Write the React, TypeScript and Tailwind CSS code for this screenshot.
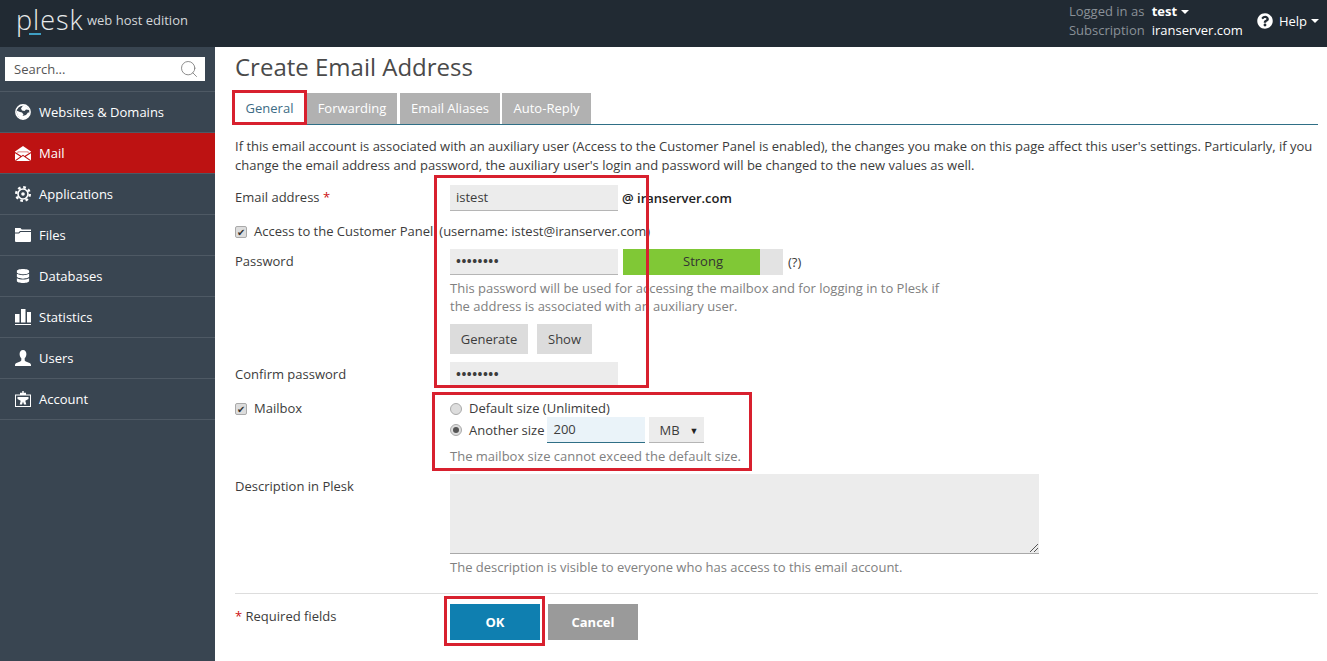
import React from "react";
import { FaDatabase, FaQuestionCircle } from "react-icons/fa";
import { Search } from "lucide-react";

const Globe = () => (
  <svg width="16" height="16" viewBox="0 0 16 16" fill="#fff">
    <circle cx="8" cy="8" r="7.100" fill="none" stroke="#fff" strokeWidth="1.600" />
    <path d="M8 1.500 12 2.500 14.500 6 11 5.500 9.500 7 7 6.500 6 4.500z" />
    <path d="M1.500 6.500 5 8l2 .5 1.500 2L7.500 12 11 11l2-2.500 1.500 0-1 4-4 2.500-4-.5-3-3z" />
  </svg>
);

const Mail = () => (
  <svg width="16" height="15" viewBox="0 0 16 15">
    <path d="M8 0 16 5.500V15H0V5.500Z" fill="#fff" />
    <path d="M2.500 6.200h11" stroke="#bd1212" strokeWidth="1.100" fill="none" />
    <path d="M2.500 6.200 8 10l5.500-3.800" fill="#fff" />
    <path d="M0 6.500 5.800 10.200M16 6.500 10.200 10.200M.3 14.700 8 9.300l7.700 5.400" stroke="#bd1212" strokeWidth="1.100" fill="none" />
  </svg>
);

const Gear = () => (
  <svg width="16" height="16" viewBox="0 0 16 16" fill="none" stroke="#fff">
    <circle cx="8" cy="8" r="6.800" strokeWidth="2.400" strokeDasharray="2.670 2.670" />
    <circle cx="8" cy="8" r="5" strokeWidth="1.600" />
    <circle cx="8" cy="8" r="1.800" fill="#fff" strokeWidth="0" />
  </svg>
);

const Folder = () => (
  <svg width="16" height="14" viewBox="0 0 16 14" fill="#fff">
    <path d="M0 0h5.500l1.200 1.500H16V3H5L3.500 4.500H0z" />
    <path d="M0 5.500h4L5.500 4H16v9a1 1 0 01-1 1H1a1 1 0 01-1-1z" />
  </svg>
);

const Bars = () => (
  <svg width="16" height="16" viewBox="0 0 16 16" fill="#fff">
    <rect x="0" y="5" width="4.500" height="8.500" />
    <rect x="6" y="0" width="4.500" height="13.500" />
    <rect x="12" y="3" width="4" height="10.500" />
    <rect x="0" y="15" width="16" height="1" />
  </svg>
);

const User = () => (
  <svg width="16" height="16" viewBox="0 0 16 16" fill="#fff">
    <path d="M8 0c2.200 0 3.400 1.800 3.400 4 0 1.800-.8 3.400-1.700 4.300v2c0 .8 1 1.300 3 2 1.800.6 3.300 1.300 3.300 2.700v1H0v-1c0-1.400 1.500-2.100 3.300-2.700 2-.7 3-1.200 3-2v-2C5.400 7.400 4.600 5.800 4.600 4 4.600 1.800 5.800 0 8 0z" />
  </svg>
);

const Account = () => (
  <svg width="16" height="16" viewBox="0 0 16 16" fill="#fff">
    <path fillRule="evenodd" d="M0 3.500h5V1.800h2.300V0h1.400v1.800H11v1.700h5V16H0zm1 1V15h14V4.500z" />
    <path d="M2.500 6h11v2L10.300 9.800l1 3.700H9L8 10.500l-1 3H4.700l1-3.700L2.500 8z" />
  </svg>
);

const navItems: [string, React.ReactNode, boolean?][] = [
  ["Websites & Domains", <Globe />],
  ["Mail", <Mail />, true],
  ["Applications", <Gear />],
  ["Files", <Folder />],
  ["Databases", <FaDatabase size={14} className="text-white" />],
  ["Statistics", <Bars />],
  ["Users", <User />],
  ["Account", <Account />],
];

const Caret = () => <span className="inline-block ml-1 mb-[2px] border-x-[4px] border-t-[4px] border-x-transparent border-t-current align-middle" />;

const Dots = () => <span className="tracking-[0.5px] text-[13px] font-bold">••••••••</span>;

const Check = () => (
  <span className="w-[12px] h-[12px] shrink-0 rounded-[2px] border border-[#aaa] bg-[#ddd] flex items-center justify-center text-[10px] leading-none text-[#333]">✔</span>
);

export default function App() {
  return (
    <div className="relative w-[1327px] h-[661px] overflow-hidden bg-white text-[13px] leading-[19px] text-[#3c3c3c] font-['Open_Sans',sans-serif]">
      <header className="h-[47px] bg-[#212a33] flex items-center justify-between pl-[16px] pr-[8px]">
        <div className="flex items-center">
          <div className="relative h-[47px] w-[65px]">
            <span className="block text-[27px] leading-[36px] mt-[2px] font-light tracking-[1px] text-[#e8eaec]">plesk</span>
            <span className="absolute left-[13px] top-[33px] w-[12px] h-[2px] bg-[#3f9fc4]" />
          </div>
          <span className="ml-[6px] mb-[7px] text-[#d3d6d9]">web host edition</span>
        </div>
        <div className="flex items-center mb-[5px]">
          <div className="grid grid-cols-[auto_auto] gap-x-[7px] leading-[19px]">
            <span className="text-[#8a9198]">Logged in as</span>
            <span className="text-white font-bold">test<Caret /></span>
            <span className="text-[#8a9198]">Subscription</span>
            <span className="text-white">iranserver.com</span>
          </div>
          <FaQuestionCircle size={16} className="ml-[14px] text-white" />
          <span className="ml-[6px] text-white">Help<Caret /></span>
        </div>
      </header>

      <div className="flex h-[614px]">
        <aside className="w-[215px] shrink-0 bg-[#394551]">
          <div className="h-[45px] pt-[10px] pl-[5px] pr-[10px] border-b border-[#4e5964]">
            <div className="h-[24px] bg-white flex items-center justify-between pl-[9px] pr-[6px] text-[#555]">
              <span>Search...</span>
              <Search size={20} strokeWidth={1} className="text-[#777]" />
            </div>
          </div>
          {navItems.map(([label, icon, active]) => (
            <div key={label} className={`h-[41px] flex items-center border-b border-[#4e5964] text-white ${active ? "bg-[#bd1212]" : ""}`}>
              <span className="w-[39px] shrink-0 flex justify-center pl-[15px] pr-[8px]">{icon}</span>
              <span>{label}</span>
            </div>
          ))}
        </aside>

        <main className="flex-1 pl-[20px] pr-[9px]">
          <h1 className="text-[24px] leading-[32px] mt-[4px] text-[#4a4a4a]">Create Email Address</h1>
          <nav className="flex h-[32px] mt-[10px] border-b border-[#2f6f86]">
            <div className="w-[69px] flex items-center justify-center text-[#3d6c85] bg-white">General</div>
            <div className="ml-[3px] w-[90px] flex items-center justify-center text-white bg-[#b1b1b1]">Forwarding</div>
            <div className="ml-[3px] w-[100px] flex items-center justify-center text-white bg-[#b1b1b1]">Email Aliases</div>
            <div className="ml-[2px] w-[89px] flex items-center justify-center text-white bg-[#b1b1b1]">Auto-Reply</div>
          </nav>
          <p className="mt-[12px]">If this email account is associated with an auxiliary user (Access to the Customer Panel is enabled), the changes you make on this page affect this user's settings. Particularly, if you change the email address and password, the auxiliary user's login and password will be changed to the new values as well.</p>

          <div className="flex mt-[10px] h-[26px] items-center">
            <label className="w-[215px] mt-[-2px]">Email address <span className="text-[#c11]">*</span></label>
            <div className="w-[168px] h-[26px] bg-[#ececec] border-b border-[#b5b5b5] px-[6px] leading-[24px]">istest</div>
            <span className="ml-[4px] font-semibold text-[#222]">@ iranserver.com</span>
          </div>

          <div className="flex mt-[11px] h-[19px] items-center">
            <Check />
            <span className="ml-[7px]">Access to the Customer Panel</span>
            <span className="ml-[6px]">(username: istest@iranserver.com)</span>
          </div>

          <div className="flex mt-[8px] h-[26px] items-center">
            <label className="w-[215px] mt-[-2px]">Password</label>
            <div className="w-[168px] h-[26px] bg-[#ececec] border-b border-[#b5b5b5] px-[6px] leading-[24px]"><Dots /></div>
            <div className="ml-[5px] w-[160px] h-[26px] text-center leading-[25px] text-[#333] bg-[linear-gradient(to_right,#80c836_137px,#e3e3e3_137px)]">Strong</div>
            <span className="ml-[5px]">(?)</span>
          </div>

          <div className="pl-[215px]">
            <p className="mt-[4px] w-[495px] text-[#808080] leading-[18px]">This password will be used for accessing the mailbox and for logging in to Plesk if the address is associated with an auxiliary user.</p>
            <div className="flex gap-[9px] mt-[9px]">
              <div className="w-[78px] h-[30px] bg-[#dcdcdc] flex items-center justify-center">Generate</div>
              <div className="w-[55px] h-[30px] bg-[#dcdcdc] flex items-center justify-center">Show</div>
            </div>
          </div>

          <div className="flex mt-[8px] h-[26px] items-center">
            <label className="w-[215px] mt-[-2px]">Confirm password</label>
            <div className="w-[168px] h-[26px] bg-[#ececec] border-b border-[#b5b5b5] px-[6px] leading-[24px]"><Dots /></div>
          </div>

          <div className="flex mt-[11px] h-[19px] items-center">
            <Check />
            <span className="ml-[7px] w-[196px]">Mailbox</span>
            <span className="w-[12px] h-[12px] rounded-full border border-[#aaa] bg-[#ddd]" />
            <span className="ml-[7px]">Default size (Unlimited)</span>
          </div>

          <div className="flex h-[26px] mt-[-1px] items-center pl-[215px]">
            <span className="w-[12px] h-[12px] rounded-full border border-[#aaa] bg-[#ddd] flex items-center justify-center"><span className="w-[6px] h-[6px] rounded-full bg-[#555]" /></span>
            <span className="ml-[7px]">Another size</span>
            <div className="ml-[3px] w-[98px] h-[26px] bg-[#eaf3f9] border-b border-[#2f6f86] px-[6px] leading-[24px]">200</div>
            <div className="ml-[4px] w-[55px] h-[26px] bg-[#ececec] border-b border-[#b5b5b5] flex items-center pl-[10px] pt-[1px] justify-between pr-[6px]">
              <span>MB</span><span className="text-[9px] text-[#222]">▼</span>
            </div>
          </div>

          <p className="pl-[215px] mt-[4px] text-[#808080]">The mailbox size cannot exceed the default size.</p>

          <div className="flex mt-[8px]">
            <label className="w-[215px] mt-[3px]">Description in Plesk</label>
            <div className="relative w-[589px] h-[80px] bg-[#ececec] border-b border-[#a9a9a9]">
              <svg className="absolute right-[1px] bottom-[1px]" width="9" height="9" viewBox="0 0 9 9" stroke="#555"><path d="M1 9 9 1M5 9l4-4" /></svg>
            </div>
          </div>
          <p className="pl-[215px] mt-[4px] text-[#808080]">The description is visible to everyone who has access to this email account.</p>

          <div className="mt-[16px] border-t border-[#ddd] flex pt-[10px]">
            <span className="w-[215px] mt-[3px]"><span className="text-[#c11]">*</span> Required fields</span>
            <div className="w-[90px] h-[36px] bg-[#0f7fb0] text-white font-bold flex items-center justify-center">OK</div>
            <div className="ml-[8px] w-[90px] h-[36px] bg-[#9a9a9a] text-white font-bold flex items-center justify-center">Cancel</div>
          </div>
        </main>
      </div>

      <div className="absolute left-[232px] top-[90px] w-[75px] h-[35px] border-[3px] border-[#d8202e] pointer-events-none" />
      <div className="absolute left-[434px] top-[175px] w-[215px] h-[213px] border-[3px] border-[#d8202e] pointer-events-none" />
      <div className="absolute left-[432px] top-[392px] w-[320px] h-[79px] border-[3px] border-[#d8202e] pointer-events-none" />
      <div className="absolute left-[444px] top-[596px] w-[101px] h-[50px] border-[3px] border-[#d8202e] pointer-events-none" />
    </div>
  );
}
